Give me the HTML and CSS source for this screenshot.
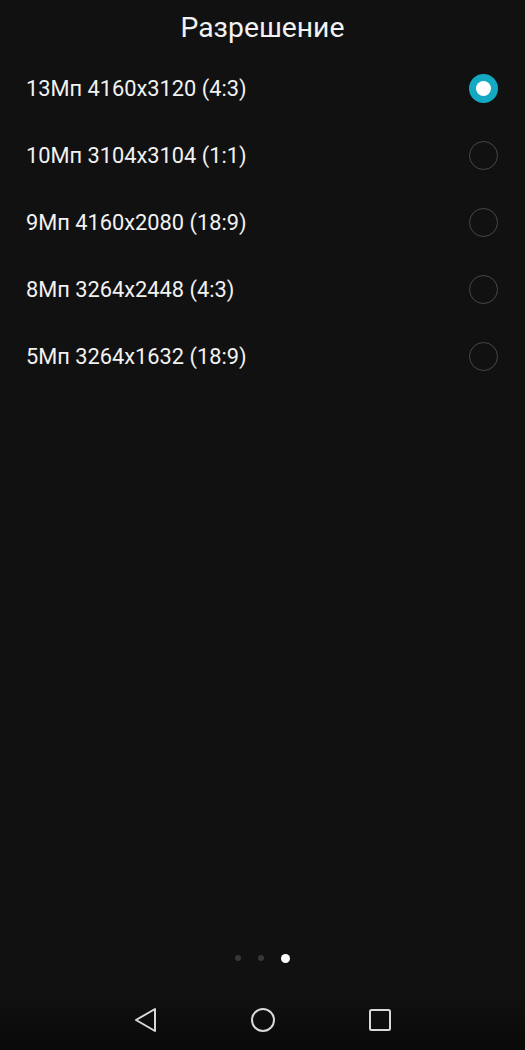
FILE: index.html
```html
<!DOCTYPE html>
<html>
  <head>
    <meta charset="UTF-8">
    <title>Разрешение</title>
    <link rel="stylesheet" href="styles.css">
  </head>
  <body>
    <div id="screen">
      <h1 class="title">Разрешение</h1>
      <ul class="options">
        <li class="option"><span>13Мп 4160x3120 (4:3)</span><span class="radio checked"></span></li>
        <li class="option"><span>10Мп 3104x3104 (1:1)</span><span class="radio"></span></li>
        <li class="option"><span>9Мп 4160x2080 (18:9)</span><span class="radio"></span></li>
        <li class="option"><span>8Мп 3264x2448 (4:3)</span><span class="radio"></span></li>
        <li class="option"><span>5Мп 3264x1632 (18:9)</span><span class="radio"></span></li>
      </ul>
      <div class="spacer"></div>
      <div class="pager">
        <span class="dot"></span>
        <span class="dot"></span>
        <span class="dot active"></span>
      </div>
      <div class="navbar">
        <svg width="24" height="28" viewBox="0 0 24 28"><path d="M2 14 L21 3 L21 25 Z" fill="none" stroke="#d8d8d8" stroke-width="2" stroke-linejoin="round"/></svg>
        <svg width="26" height="26" viewBox="0 0 26 26"><circle cx="13" cy="13" r="11" fill="none" stroke="#d8d8d8" stroke-width="2"/></svg>
        <svg width="24" height="24" viewBox="0 0 24 24"><rect x="2" y="2" width="20" height="20" rx="1.5" fill="none" stroke="#d8d8d8" stroke-width="2"/></svg>
      </div>
    </div>
  </body>
</html>
```

FILE: styles.css
```css
html, body { margin: 0; padding: 0; background: #111; }
body { font-family: Roboto, "Noto Sans", sans-serif; color: #f2f2f2; }
#screen { display: flex; flex-direction: column; height: 1050px; }
.title { margin: 0; height: 55px; line-height: 56px; font-size: 28.3px; font-weight: normal; text-align: center; }
.options { list-style: none; margin: 0; padding: 0; }
.option { display: flex; align-items: center; justify-content: space-between; height: 67px; padding: 0 27px 0 26px; font-size: 21.8px; }
.radio { box-sizing: border-box; width: 29px; height: 29px; border-radius: 50%; border: 1.5px solid #484848; }
.radio.checked { border: none; background: #14a9c2; display: flex; align-items: center; justify-content: center; }
.radio.checked::after { content: ""; width: 15px; height: 15px; border-radius: 50%; background: #fff; }
.spacer { flex: 1; }
.pager { display: flex; justify-content: center; align-items: center; gap: 17px; height: 10px; margin-bottom: 27px; }
.dot { width: 6px; height: 6px; border-radius: 50%; background: #383838; }
.dot.active { width: 9px; height: 9px; background: #fff; }
.navbar { display: flex; justify-content: center; align-items: center; gap: 92px; height: 60px; background: linear-gradient(#111, #090909); }
```
